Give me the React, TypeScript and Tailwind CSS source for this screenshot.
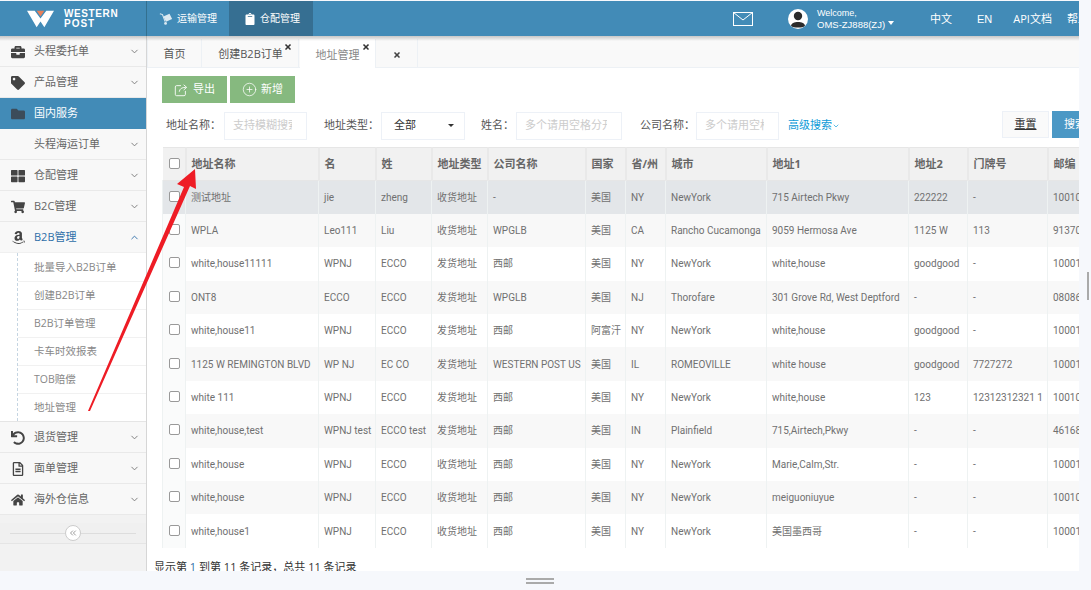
import { ChevronDown, ChevronUp, ChevronsLeft, CirclePlus, X } from "lucide-react";
import {
  FaAmazon,
  FaBriefcase,
  FaClipboard,
  FaFolder,
  FaHome,
  FaRegFileAlt,
  FaShoppingCart,
  FaTag,
  FaThLarge,
  FaUndo,
} from "react-icons/fa";
import type { IconType } from "react-icons";

type MenuItem = { label: string; icon?: IconType; active?: boolean };

const topMenu: MenuItem[] = [
  { label: "头程委托单", icon: FaBriefcase },
  { label: "产品管理", icon: FaTag },
  { label: "国内服务", icon: FaFolder, active: true },
  { label: "头程海运订单" },
  { label: "仓配管理", icon: FaThLarge },
  { label: "B2C管理", icon: FaShoppingCart },
];

const bottomMenu: MenuItem[] = [
  { label: "退货管理", icon: FaUndo },
  { label: "面单管理", icon: FaRegFileAlt },
  { label: "海外仓信息", icon: FaHome },
];

const subMenu = ["批量导入B2B订单", "创建B2B订单", "B2B订单管理", "卡车时效报表", "TOB赔偿", "地址管理"];

const columns = [
  { title: "地址名称", width: "w-[133px]" },
  { title: "名", width: "w-[57px]" },
  { title: "姓", width: "w-[56px]" },
  { title: "地址类型", width: "w-[56px]" },
  { title: "公司名称", width: "w-[98px]" },
  { title: "国家", width: "w-[40px]" },
  { title: "省/州", width: "w-[40px]" },
  { title: "城市", width: "w-[101px]" },
  { title: "地址1", width: "w-[142px]" },
  { title: "地址2", width: "w-[59px]" },
  { title: "门牌号", width: "w-[80px]" },
  { title: "邮编", width: "w-[60px]" },
];

const rows = [
  ["测试地址", "jie", "zheng", "收货地址", "-", "美国", "NY", "NewYork", "715 Airtech Pkwy", "222222", "-", "10010"],
  ["WPLA", "Leo111", "Liu", "收货地址", "WPGLB", "美国", "CA", "Rancho Cucamonga", "9059 Hermosa Ave", "1125 W", "113", "91370"],
  ["white,house11111", "WPNJ", "ECCO", "发货地址", "西邮", "美国", "NY", "NewYork", "white,house", "goodgood", "-", "10001"],
  ["ONT8", "ECCO", "ECCO", "发货地址", "WPGLB", "美国", "NJ", "Thorofare", "301 Grove Rd, West Deptford", "-", "-", "08086"],
  ["white,house11", "WPNJ", "ECCO", "发货地址", "西邮", "阿富汗", "NY", "NewYork", "white,house", "goodgood", "-", "10001"],
  ["1125 W REMINGTON BLVD", "WP NJ", "EC CO", "发货地址", "WESTERN POST US", "美国", "IL", "ROMEOVILLE", "white house", "goodgood", "7727272", "10001"],
  ["white 111", "WPNJ", "ECCO", "发货地址", "西邮", "美国", "NY", "NewYork", "white,house", "123", "12312312321 1", "10010"],
  ["white,house,test", "WPNJ test", "ECCO test", "发货地址", "西邮", "美国", "IN", "Plainfield", "715,Airtech,Pkwy", "-", "-", "46168"],
  ["white,house", "WPNJ", "ECCO", "收货地址", "西邮", "美国", "NY", "NewYork", "Marie,Calm,Str.", "-", "-", "10001"],
  ["white,house", "WPNJ", "ECCO", "收货地址", "西邮", "美国", "NY", "NewYork", "meiguoniuyue", "-", "-", "10010"],
  ["white,house1", "WPNJ", "ECCO", "收货地址", "西邮", "美国", "NY", "NewYork", "美国墨西哥", "-", "-", "10001"],
];

function SideRow({ item }: { item: MenuItem }) {
  const Icon = item.icon;
  return (
    <div
      className={`flex h-[31px] items-center border-b pr-[6px] pt-[1px] ${
        item.active ? "border-[#428bb7] bg-[#428bb7] text-white" : "border-[#e9e9e9] bg-[#f8f8f8] text-[#666]"
      }`}
    >
      <span className="flex w-[34px] justify-center pl-[2px]">
        {Icon && <Icon className={`h-[14px] w-[14px] ${item.active ? "text-[#3c4c5a]" : "text-[#444]"}`} />}
      </span>
      <span className="flex-1 text-[11px]">{item.label}</span>
      {!item.active && <ChevronDown className="h-[11px] w-[11px] text-[#777]" />}
    </div>
  );
}

function Field({ label, width, placeholder }: { label: string; width: string; placeholder: string }) {
  return (
    <>
      <span className="text-[11px] text-[#555]">{label}</span>
      <div className={`flex h-[28px] items-center overflow-hidden whitespace-nowrap border border-[#edf1f7] bg-white pl-[8px] pr-[14px] text-[11px] text-[#ccc] ${width}`}>
        <span className="overflow-hidden">{placeholder}</span>
      </div>
    </>
  );
}

function CheckBox() {
  return <span className="mb-[2px] block h-[11px] w-[11px] rounded-[2px] border border-[#999] bg-white" />;
}

export default function App() {
  return (
    <div className="relative flex h-[590px] w-[1091px] flex-col overflow-hidden bg-[#f6f8fc] font-['Open_Sans','Noto_Sans_CJK_SC',sans-serif]">
      {/* top bar */}
      <header className="relative z-20 mt-[1px] flex h-[35px] w-[1079px] shrink-0 items-center overflow-hidden bg-[#428bb7] text-white">
        <div className="flex h-full w-[147px] shrink-0 items-center border-r border-[#33708f] pl-[27px]">
          <svg viewBox="0 0 28 17" className="h-[18px] w-[27px]">
            <polygon points="0,0 8,0 14,8 20,0 28,0 18,17 14,11 10,17" fill="#fff" />
            <polygon points="10,0 18,0 14,6" fill="#e8805a" />
          </svg>
          <div className="ml-[10px] font-['Liberation_Sans',sans-serif] text-[10px] font-bold leading-[10px] tracking-[0.6px]">
            <div>WESTERN</div>
            <div className="tracking-[1px]">POST</div>
          </div>
        </div>
        <div className="flex h-full items-center gap-[4px] px-[12px] text-[10px]">
          <svg viewBox="0 0 16 16" className="h-[14px] w-[14px]">
            <path d="M1 2 L4 3 L7 11" stroke="#dce9f1" strokeWidth="1.2" fill="none" />
            <polygon points="5,5 12,2 15,8 8,11" fill="#dce9f1" />
            <circle cx="7.5" cy="13" r="1.6" fill="#dce9f1" />
          </svg>
          运输管理
        </div>
        <div className="flex h-full w-[84px] items-center gap-[4px] bg-[#366f92] pl-[15px] text-[10px]">
          <FaClipboard className="h-[12px] w-[12px]" />
          仓配管理
        </div>
        <div className="flex-1" />
        <svg viewBox="0 0 20 14" className="mr-[35px] h-[14px] w-[20px] shrink-0" fill="none" stroke="#fff" strokeWidth="1">
          <rect x="0.5" y="0.5" width="19" height="13" />
          <path d="M0.5 0.5 L10 8 L19.5 0.5" />
        </svg>
        <span className="flex h-[20px] w-[20px] shrink-0 items-center justify-center overflow-hidden rounded-full bg-white">
          <svg viewBox="0 0 20 20" className="h-[20px] w-[20px]">
            <circle cx="10" cy="7" r="4.2" fill="#2b2b2b" />
            <path d="M3 17 C3 11.5 17 11.5 17 17 C15 19 5 19 3 17 Z" fill="#2b2b2b" />
          </svg>
        </span>
        <div className="ml-[9px] w-[79px] shrink-0 font-['Liberation_Sans',sans-serif] leading-[12px]">
          <div className="text-[9px]">Welcome,</div>
          <div className="flex items-center gap-[3px] whitespace-nowrap text-[9.5px]">
            OMS-ZJ888(ZJ)
            <span className="mb-[3px] h-0 w-0 border-x-[3.5px] border-t-[4px] border-x-transparent border-t-white" />
          </div>
        </div>
        <div className="ml-[34px] flex w-[149px] shrink-0 items-center overflow-hidden whitespace-nowrap pt-[1px] text-[11px]">
          <span>中文</span>
          <span className="ml-[25px] font-['Liberation_Sans',sans-serif]">EN</span>
          <span className="ml-[21px]">API文档</span>
          <span className="ml-[15px]">帮助</span>
        </div>
      </header>

      <div className="flex min-h-0 flex-1">
        {/* left menu */}
        <aside className="relative z-10 flex w-[147px] shrink-0 flex-col border-r border-[#d6d6d6] bg-[#f2f2f2]">
          {topMenu.map((item) => (
            <SideRow key={item.label} item={item} />
          ))}
          <div className="flex h-[31px] items-center border-b border-[#f0f0f0] bg-[#f8f8f8] pr-[6px] pt-[1px] text-[#2f6fa8]">
            <span className="flex w-[34px] justify-center pl-[2px]">
              <FaAmazon className="h-[15px] w-[15px] text-[#444]" />
            </span>
            <span className="flex-1 text-[11px]">B2B管理</span>
            <ChevronUp className="h-[11px] w-[11px]" />
          </div>
          <div className="bg-white">
            <div className="ml-[17px] border-l border-dashed border-[#c5d5e2] pt-[1px]">
              {subMenu.map((label) => (
                <div key={label} className="flex h-[28px] items-center border-b border-[#f1f1f1] pl-[16px] text-[10.5px] text-[#888] last:h-[27px] last:border-b-0">
                  {label}
                </div>
              ))}
            </div>
          </div>
          <div className="border-t border-[#e5e5e5]">
            {bottomMenu.map((item) => (
              <SideRow key={item.label} item={item} />
            ))}
          </div>
          <div className="mt-[8px] flex h-[21px] items-center border-b border-[#e5e5e5] bg-[#f0f0f0] px-[10px]">
            <span className="h-px flex-1 bg-[#ddd]" />
            <span className="flex h-[16px] w-[16px] items-center justify-center rounded-full border border-[#ccc] bg-white">
              <ChevronsLeft className="h-[10px] w-[10px] text-[#888]" />
            </span>
            <span className="h-px flex-1 bg-[#ddd]" />
          </div>
        </aside>

        {/* content */}
        <main className="flex w-[932px] shrink-0 flex-col overflow-hidden bg-white">
          <nav className="flex h-[32px] shrink-0 items-end gap-[1px] border-b border-[#edf1f5] bg-[#f9f9f9] text-[11px] text-[#555]">
            <div className="flex h-[28px] w-[55px] items-center justify-center border-x border-[#edf1f5] bg-[#f9f9f9] pt-[3px]">首页</div>
            <div className="relative flex h-[28px] w-[96px] items-center justify-center border-r border-[#edf1f5] pt-[3px]">
              创建B2B订单
              <X className="absolute right-[6px] top-[4px] h-[8px] w-[8px] text-[#333]" strokeWidth={5} />
            </div>
            <div className="relative -mb-px flex h-[29px] w-[76px] items-center justify-center border-r border-[#edf1f5] bg-white pt-[3px] text-[#888]">
              地址管理
              <X className="absolute right-[5px] top-[4px] h-[8px] w-[8px] text-[#333]" strokeWidth={5} />
            </div>
            <div className="flex h-[28px] w-[41px] items-center justify-center border-r border-[#edf1f5] pt-[3px]">
              <X className="h-[8px] w-[8px] text-[#444]" strokeWidth={5} />
            </div>
          </nav>

          <div className="flex shrink-0 gap-[3px] pl-[15px] pt-[8px] text-[11px] text-white">
            <button className="flex h-[27px] w-[65px] items-center justify-center gap-[5px] bg-[#86b97f]">
              <svg viewBox="0 0 16 16" className="h-[14px] w-[14px]" fill="none" stroke="#fff" strokeWidth="1">
                <path d="M8 3 H3 a1.5 1.5 0 0 0 -1.5 1.5 V13 a1.5 1.5 0 0 0 1.5 1.5 H11.5 a1.5 1.5 0 0 0 1.5 -1.5 V9" />
                <path d="M6 10 C6.5 6.5 9 5 13.5 5 M11 2 L14.5 5 L11 8" />
              </svg>
              导出
            </button>
            <button className="flex h-[27px] w-[65px] items-center justify-center gap-[4px] bg-[#86b97f]">
              <CirclePlus className="h-[15px] w-[15px]" strokeWidth={1.2} />
              新增
            </button>
          </div>

          <div className="flex h-[44px] shrink-0 items-center pl-[19px] pt-[1px]">
            <Field label="地址名称：" width="ml-[3px] w-[83px]" placeholder="支持模糊搜索" />
            <span className="ml-[17px] text-[11px] text-[#555]">地址类型：</span>
            <div className="ml-[2px] flex h-[28px] w-[84px] items-center justify-between border border-[#edf1f7] pl-[12px] pr-[10px] text-[11px] text-[#333]">
              全部
              <span className="h-0 w-0 border-x-[3px] border-t-[3px] border-x-transparent border-t-[#333]" />
            </div>
            <span className="ml-[16px]" />
            <Field label="姓名：" width="ml-[2px] w-[106px]" placeholder="多个请用空格分开" />
            <span className="ml-[18px]" />
            <Field label="公司名称：" width="ml-[1px] w-[83px]" placeholder="多个请用空格" />
            <span className="ml-[9px] flex items-center text-[11px] text-[#0e9bd8]">
              高级搜索
              <ChevronDown className="h-[8px] w-[8px]" />
            </span>
            <div className="ml-auto flex shrink-0">
              <button className="mb-[3px] h-[27px] w-[47px] border border-[#edf1f7] bg-[#fafafa] text-[11px] text-[#333] underline">重置</button>
              <button className="mb-[3px] ml-[3px] h-[27px] w-[27px] overflow-hidden whitespace-nowrap bg-[#4b98c5] pl-[12px] text-left text-[11px] text-white">搜索</button>
            </div>
          </div>

          <div className="ml-[15px] min-h-0 shrink-0">
            <table className="w-[945px] table-fixed border-collapse font-['Roboto','Noto_Sans_CJK_SC',sans-serif] text-[10px] text-[#707070]">
              <thead>
                <tr className="h-[33px] border-y border-[#e6e6e6] bg-[#f1f1f1] text-left font-['Open_Sans','Noto_Sans_CJK_SC',sans-serif] text-[11px] font-bold text-[#666]">
                  <th className="w-[23px] border-r-2 border-[#e9e9e9] pl-[6px]">
                    <CheckBox />
                  </th>
                  {columns.map((col) => (
                    <th key={col.title} className={`${col.width} overflow-hidden whitespace-nowrap border-r-2 border-[#e9e9e9] pl-[5px] font-bold last:border-r-0`}>
                      {col.title}
                    </th>
                  ))}
                </tr>
              </thead>
              <tbody>
                {rows.map((row, i) => (
                  <tr key={i} className={`h-[33.4px] ${i === 0 ? "bg-[#e3e6e9]" : i % 2 === 1 ? "bg-[#f8f8f8]" : "bg-white"}`}>
                    <td className={`border-x border-[#eef2f2] pl-[6px] ${i === 0 ? "" : "bg-[#fafbfb]"}`}>
                      <CheckBox />
                    </td>
                    {row.map((cell, j) => (
                      <td key={j} className="overflow-hidden whitespace-nowrap border-r border-[#eef2f2] pl-[5px] last:border-r-0">
                        {cell}
                      </td>
                    ))}
                  </tr>
                ))}
              </tbody>
            </table>
          </div>
          <p className="ml-[7px] mt-[11px] whitespace-nowrap text-[11px] text-[#333]">
            显示第 <span className="text-[#2f6fa8]">1</span> 到第 11 条记录，总共 11 条记录
          </p>
        </main>
      </div>

      {/* bottom strip */}
      <div className="relative z-10 flex h-[19px] shrink-0 flex-col items-center justify-center gap-[2px] bg-[#f6f8fc] pr-[11px]">
        <span className="h-[2px] w-[28px] bg-[#aaa]" />
        <span className="h-[2px] w-[28px] bg-[#aaa]" />
      </div>

      {/* header drop shadow, over the menu and content */}
      <div className="pointer-events-none absolute left-0 top-[36px] z-20 h-[5px] w-[1079px] bg-gradient-to-b from-black/20 to-transparent" />

      {/* scrollbar thumb and resize grip of the browser window */}
      <span className="absolute left-[1087px] top-[272px] h-[28px] w-[2px] bg-[#aaa]" />
      <svg viewBox="0 0 7 7" className="absolute bottom-0 right-0 h-[7px] w-[7px]" stroke="#aaa" strokeWidth="1">
        <path d="M0 7 L7 0 M4 7 L7 4" />
      </svg>

      {/* annotation arrow pasted on the screenshot */}
      <svg viewBox="0 0 1091 590" className="pointer-events-none absolute left-0 top-0 z-30 h-[590px] w-[1091px]">
        <polygon points="88,411 184,187 177,184 195,169 196,189 190,186 90,411" fill="#ee1c25" />
      </svg>
    </div>
  );
}
